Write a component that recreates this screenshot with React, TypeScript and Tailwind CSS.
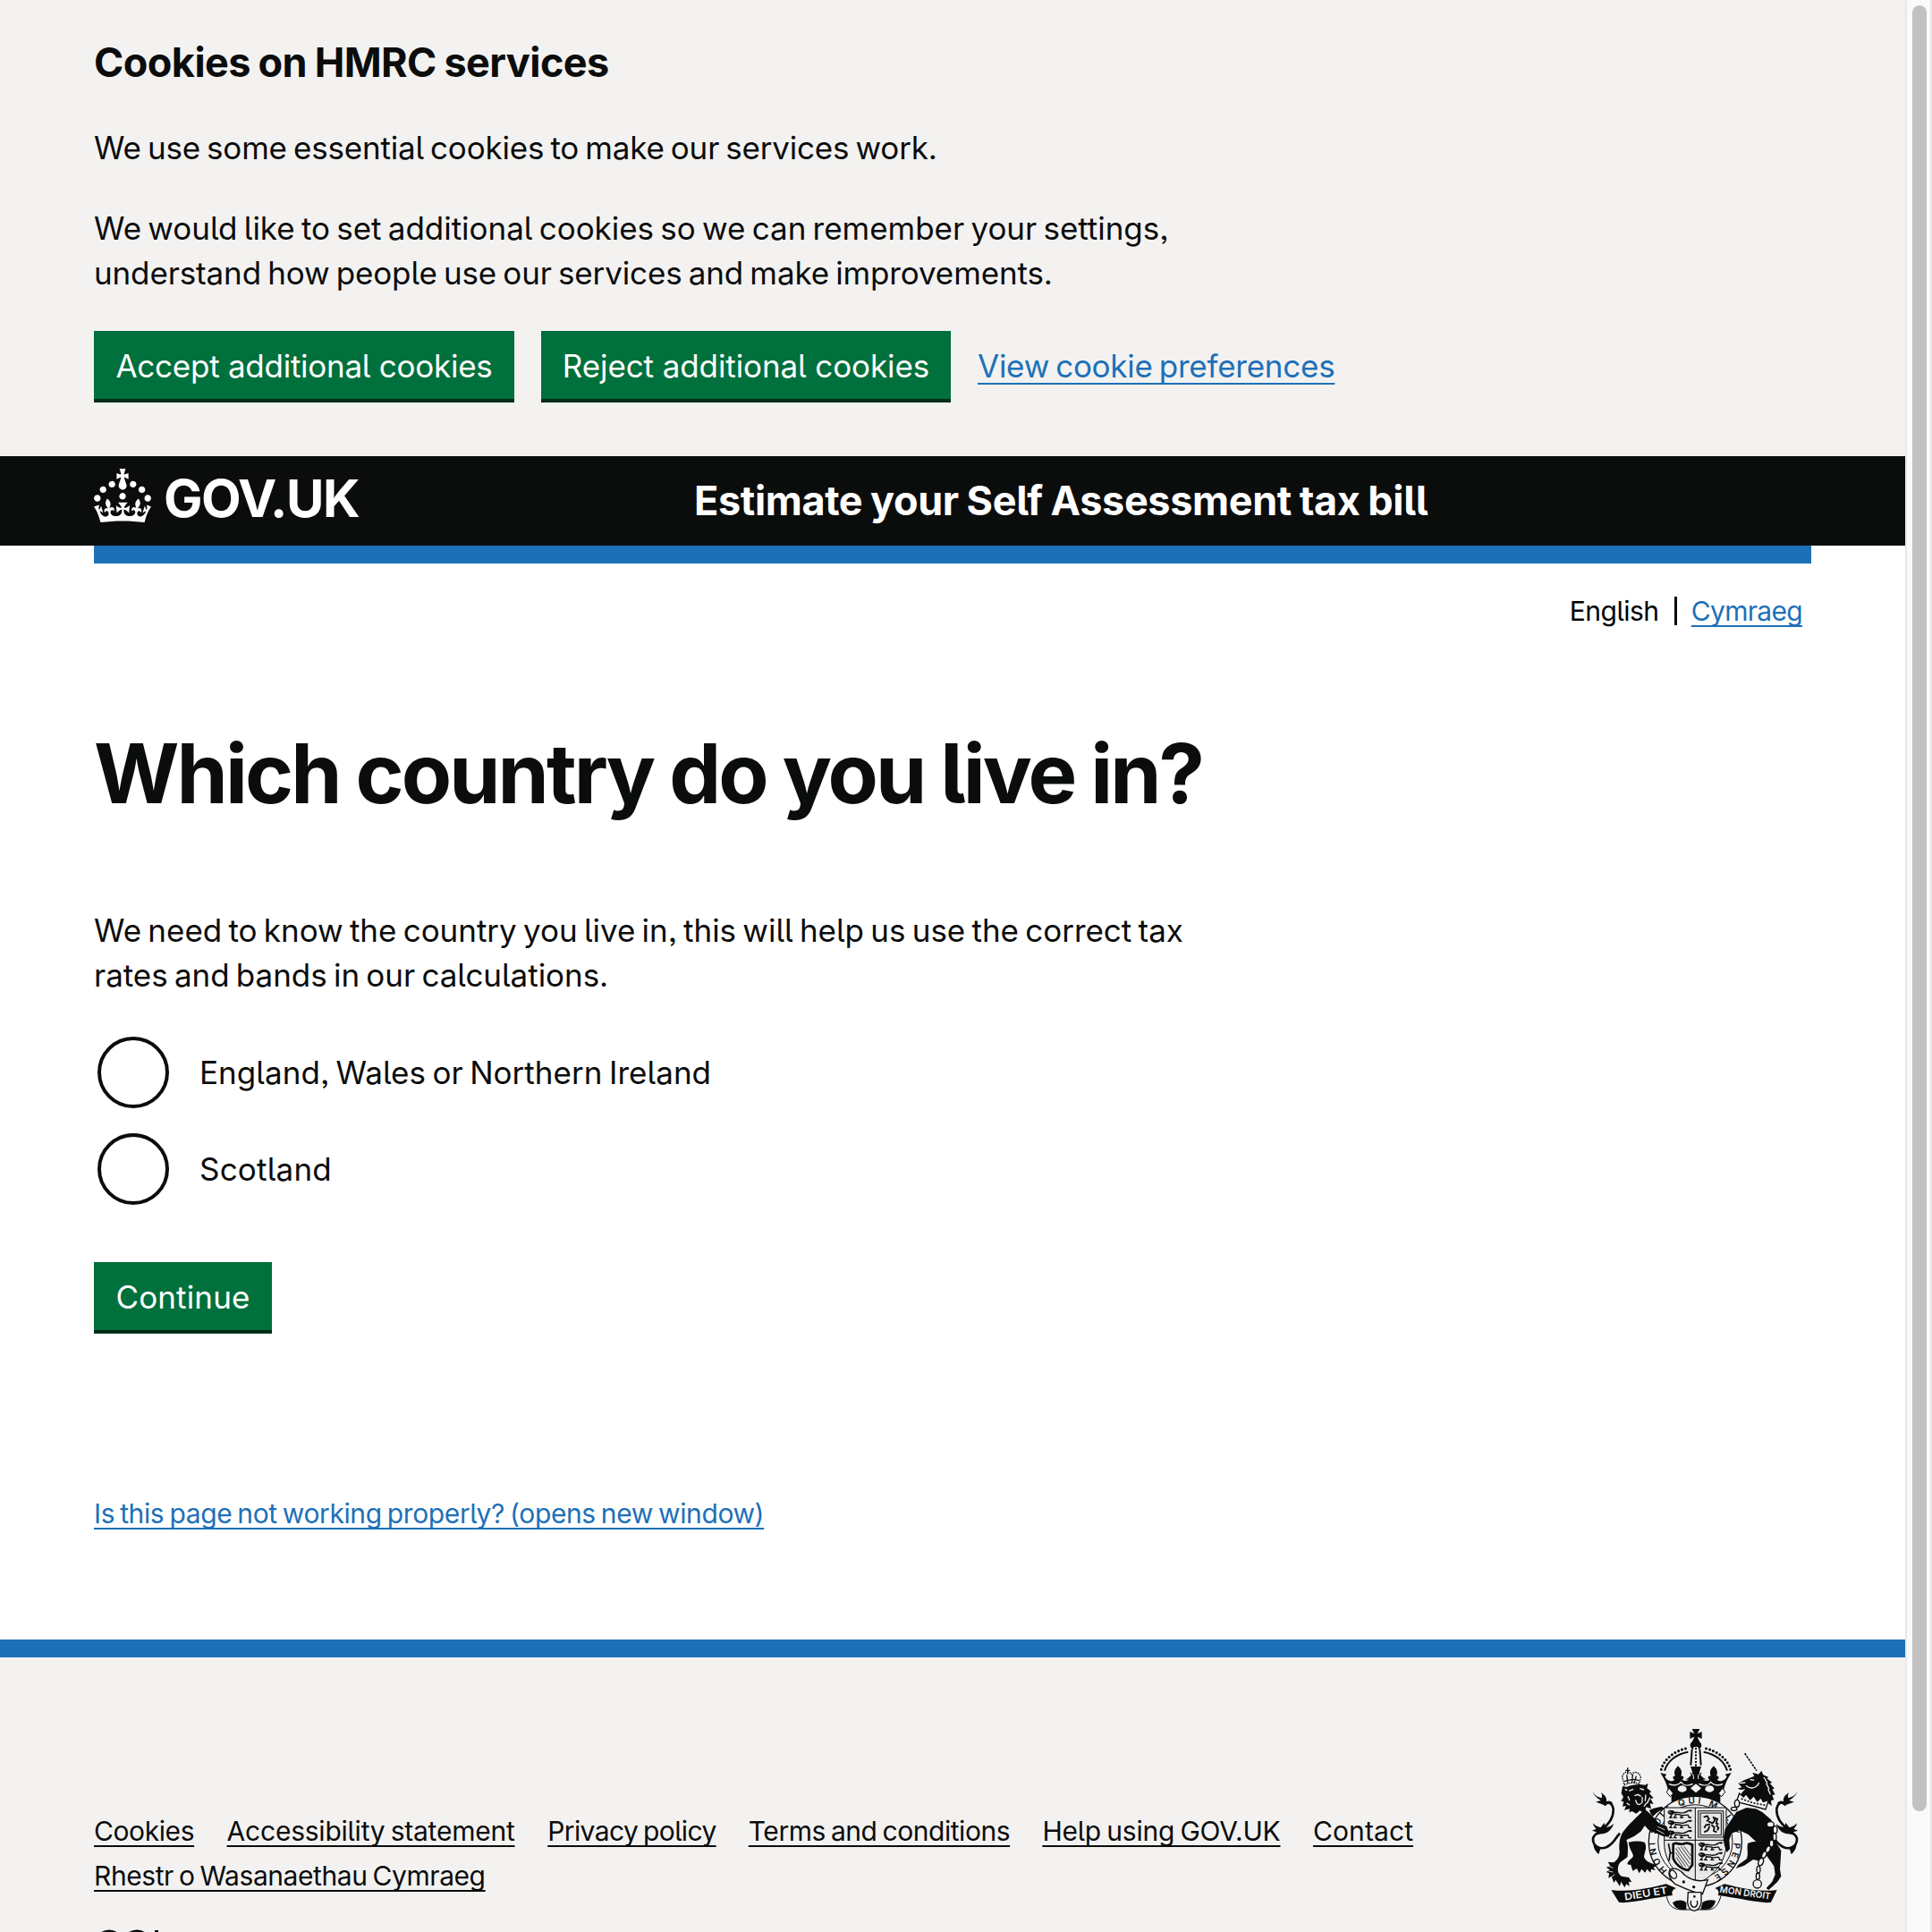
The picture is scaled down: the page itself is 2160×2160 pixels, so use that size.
import type { ReactNode } from "react";

const INK = "#0b0c0c";
const PAPER = "#f3f2f1";

function Button({ children, className }: { children: ReactNode; className: string }) {
  return (
    <button
      type="button"
      className={`flex h-[76px] items-center justify-center whitespace-nowrap bg-[#00703c] pt-[2px] text-[35px] leading-[50px] text-white shadow-[0_4px_0_#002d18] ${className}`}
    >
      {children}
    </button>
  );
}

function Crown() {
  return (
    <svg viewBox="0 0 32 30" className="h-[60px] w-[64px] fill-white" aria-hidden="true">
      <path d="M22.6 10.4c-1 .4-2-.1-2.4-1-.4-.9.1-2 1-2.4.9-.4 2 .1 2.4 1s-.1 2-1 2.4m-5.9 6.7c-.9.4-2-.1-2.4-1-.4-.9.1-2 1-2.4.9-.4 2 .1 2.4 1s-.1 2-1 2.4m10.8-3.7c-1 .4-2-.1-2.4-1-.4-.9.1-2 1-2.4.9-.4 2 .1 2.4 1s0 2-1 2.4m3.3 4.8c-1 .4-2-.1-2.4-1-.4-.9.1-2 1-2.4.9-.4 2 .1 2.4 1s-.1 2-1 2.4M17 4.7l2.3 1.2V2.5l-2.3.7-.2-.2.9-3h-3.4l.9 3-.2.2c-.1.1-2.3-.7-2.3-.7v3.4L15 4.7c.1.1.1.2.2.2l-1.3 4c-.1.2-.1.4-.1.6 0 1.1.8 2 1.9 2.2h.7c1-.2 1.9-1.1 1.9-2.1 0-.2 0-.4-.1-.6l-1.3-4c-.1-.2 0-.2.1-.3m-7.6 5.7c.9.4 2-.1 2.4-1 .4-.9-.1-2-1-2.4-.9-.4-2 .1-2.4 1s0 2 1 2.4m-5 3c.9.4 2-.1 2.4-1 .4-.9-.1-2-1-2.4-.9-.4-2 .1-2.4 1s.1 2 1 2.4m-3.2 4.8c.9.4 2-.1 2.4-1 .4-.9-.1-2-1-2.4-.9-.4-2 .1-2.4 1s0 2 1 2.4m14.8 11c4.4 0 8.6.3 12.3.8 1.1-4.5 2.4-7 3.7-8.8l-2.5-.9c.2 1.3.3 1.9 0 2.7-.4-.4-.8-1.1-1.1-2.3l-1.2 4c.7-.5 1.3-.8 2-.9-1.1 2.5-2.6 3.1-3.5 3-1.1-.2-1.7-1.2-1.5-2.1.3-1.2 1.5-1.5 2.1-.1 1.1-2.3-.8-3-2-2.3 1.9-1.9 2.1-3.5.6-5.6-2.1 1.6-2.1 3.2-1.2 5.5-1.2-1.4-3.2-.6-2.5 1.6.9-1.4 2.1-.5 1.9.8-.2 1.1-1.7 2.1-3.5 1.9-2.7-.2-2.9-2.1-2.9-3.6.7-.1 1.9.5 2.9 1.9l.4-4.3c-1.1 1.1-2.1 1.4-3.2 1.4.4-1.2 2.1-3 2.1-3h-5.4s1.7 1.9 2.1 3c-1.1 0-2.1-.2-3.2-1.4l.4 4.3c1-1.4 2.2-2 2.9-1.9-.1 1.5-.2 3.4-2.9 3.6-1.9.2-3.4-.8-3.5-1.9-.2-1.3 1-2.2 1.9-.8.7-2.3-1.2-3-2.5-1.6.9-2.2.9-3.9-1.2-5.5-1.5 2-1.3 3.7.6 5.6-1.2-.7-3.1 0-2 2.3.6-1.4 1.8-1.1 2.1.1.2.9-.3 1.9-1.5 2.1-.9.2-2.4-.5-3.5-3 .6 0 1.2.3 2 .9l-1.2-4c-.3 1.1-.7 1.9-1.1 2.3-.3-.8-.2-1.4 0-2.7l-2.9.9C1.3 23 2.6 25.5 3.7 30c3.7-.5 7.9-.8 12.3-.8" />
    </svg>
  );
}

/* One walking lion of the English quarters, about 84 x 26 units. */
function PassantLion({ x, y }: { x: number; y: number }) {
  return (
    <g transform={`translate(${x} ${y})`}>
      <path d="M0 5l8-5 12 2 4 6-5 7-9 1-7-4z" fill={INK} />
      <path
        d="M20 9c14-5 26 5 38-1s14-8 20-3M24 13c10 3 14 1 22 4s16-3 24 0M14 16l-6 9h8M28 15l-6 10h9M48 17l-4 8h9M68 15l4 10h8M62 8c5-8 12-8 20-6"
        fill="none"
        stroke={INK}
        strokeWidth="4.2"
      />
      <path d="M4 6l8 2" stroke={PAPER} strokeWidth="2" />
    </g>
  );
}

/* Half of the upper crown, drawn left of its axis at x = 378. */
function CrownHalf() {
  return (
    <g>
      <path d="M262 160C270 128 305 96 352 88" fill="none" stroke={INK} strokeWidth="9" strokeLinecap="round" strokeDasharray="0.1 12.4" />
      <path d="M273 164C283 132 312 108 352 101" fill="none" stroke={INK} strokeWidth="6" />
      <path d="M365 92L361 146" stroke={INK} strokeWidth="6" />
      <path
        d="M258 171l22 5-6 8c6 12 20 20 33 10-8-2-8-14 2-12-6-14-2-22 9-34 12 12 15 20 10 34 10-3 12 8 4 12 12 8 26 2 34-10l-8-14 22 4v88c-34 0-62 1-84 9v-22l-10-12c-4-26-14-48-28-67z"
        fill={INK}
      />
      <path d="M288 208c16 8 32 4 40-6 8 12 24 14 40 6" fill="none" stroke={PAPER} strokeWidth="4" />
      <ellipse cx="332" cy="225" rx="15" ry="11" fill={PAPER} />
      <path d="M288 222l14 18-10 11-12-15z" fill={PAPER} stroke={INK} strokeWidth="3" />
    </g>
  );
}

/* A supporter's tail with its tufts, drawn for the left-hand side. */
function Tail() {
  return (
    <g transform="translate(-5 0)">
      <path d="M128 374C112 392 108 404 96 412C76 430 52 426 42 410C30 386 46 378 66 362C96 340 108 316 106 292C103 274 92 268 78 272" fill="none" stroke={INK} strokeWidth="8" />
      <path d="M37 232c6 18 18 20 30 24 2-6 2-12-2-19 14 10 20 18 18 30 10-4 18 0 22 8-12-3-20 1-26 8-10-10-22-8-32-16 8-1 12-1 17-4-14-7-24-17-27-31z" fill={INK} />
      <path d="M38 340c8 10 16 12 26 14l12-16 2 16c8 0 18-2 30-12-8 22-24 34-42 34l-20 4 9-12c-8 2-14 0-20-4 6 0 10-2 14-6-6-4-10-10-11-18z" fill={INK} />
      <path d="M40 408l24 14-7 22c-10-8-19-22-17-36z" fill={INK} />
    </g>
  );
}

function RoyalArms() {
  return (
    <svg viewBox="0 0 750 660" className="h-[220px] w-[250px]" aria-hidden="true">
      {/* upper crown */}
      <CrownHalf />
      <g transform="matrix(-1 0 0 1 756 0)">
        <CrownHalf />
      </g>
      <path d="M365 24h26l-8 16 15-7v24l-15-7 8 18h-26l8-18-15 7V33l15 7z" fill={INK} />
      <path d="M360 84c-4-12 6-20 18-20s22 8 18 20l-7 10-5-10h-12l-5 10z" fill={INK} />
      <path d="M378 90v58" stroke={INK} strokeWidth="7" strokeLinecap="round" strokeDasharray="0.1 11" />
      <path d="M378 206c-12-8-24-14-36-12 14-6 22-14 24-26l-6-18h36l-6 18c2 12 10 20 24 26-12-2-24 4-36 12z" fill={INK} />
      <path d="M356 162l14 18v12M400 162l-14 18v12" fill="none" stroke={PAPER} strokeWidth="3" />
      <path d="M378 208l18 15-18 15-18-15z" fill={PAPER} />

      {/* garter */}
      <ellipse cx="376" cy="402" rx="156" ry="152" fill={PAPER} stroke={INK} strokeWidth="4" />
      <ellipse cx="376" cy="402" rx="125" ry="124" fill="none" stroke={INK} strokeWidth="3" />
      <defs>
        <path id="garter-text" d="M284 500A132 130 0 1 1 420 526" />
      </defs>
      <text fill={INK} fontSize="30" className="font-semibold">
        <textPath href="#garter-text" startOffset="2" textLength="655" lengthAdjust="spacing">
          HONI SOIT QUI MAL Y PENSE
        </textPath>
      </text>

      {/* shield */}
      <path d="M272 288H480V410C478 470 440 520 376 545C312 520 274 470 272 410Z" fill="#e8e8e7" stroke={INK} strokeWidth="3" />
      <path d="M376 288V545M272 397H480" stroke={INK} strokeWidth="3" />
      <PassantLion x={283} y={296} />
      <PassantLion x={283} y={330} />
      <PassantLion x={283} y={364} />
      <PassantLion x={386} y={404} />
      <PassantLion x={386} y={438} />
      <PassantLion x={386} y={472} />
      <rect x="386" y="299" width="84" height="88" fill="none" stroke={INK} strokeWidth="3" />
      <rect x="393" y="306" width="70" height="74" fill="none" stroke={INK} strokeWidth="3" />
      <path
        d="M404 320l12-4 6 10-8 8M420 334l14 6 8-10-6-12M440 322l10 4-4 14 8 4M426 344l-14 2-6 10M430 346l10 8-2 12 10 4M424 350l-6 14-12 6M446 346l8 10-4 8"
        fill="none"
        stroke={INK}
        strokeWidth="5.500"
      />
      <path d="M302 410c14-8 24 6 38-2 10-4 18 0 26 4v68l-14 18c-22-2-42-20-50-40z" fill="none" stroke={INK} strokeWidth="8" />
      <path d="M310 424l44 62M318 420l40 56M328 418l32 44M338 418l24 32M310 438l34 48M312 454l22 32" stroke={INK} strokeWidth="2.4" />
      <path d="M286 408l6 30-4 28M290 440h16" fill="none" stroke={INK} strokeWidth="5" />

      {/* lion */}
      <Tail />
      <path d="M131 184c8-22 24-18 31-8 8-10 26-10 31 10l-5 22c-18-5-34-5-50 4z" fill="none" stroke={INK} strokeWidth="4" strokeDasharray="5 3" />
      <path d="M149 154v22M142 163h15M146 178l4 28M166 176l-2 28M178 182l-6 22M138 200c16-6 36-8 50-3" fill="none" stroke={INK} strokeWidth="4" />
      <path
        d="M132 216l14 2c20-8 42-10 62-6l10-6-4 16 14 12-6 6 14 16-10 2 10 18-12-2 4 18-16-6-8 20-14-8-12 10-14-8-10 4 2-12-18 4 6-14-12 2 4-16-9-2 8-14-7-12z"
        fill={INK}
      />
      <path
        d="M140 226l8 4M154 232l14-6M190 224l14 4M172 248l12-4 10 6M176 262c4 18 14 20 22 8v-18M150 250l6 14M210 244l-2 22M224 254l-10 20M146 272l10 8M204 284l8-12"
        fill="none"
        stroke={PAPER}
        strokeWidth="4"
      />
      <path
        d="M190 294l16-2 20 18 30 32 24 8 4 12 8 10-5 14-18-2-28-12-22-10-12-14-14 20-22 16-26 12c8 20 4 40 4 56-12 12-26 16-30 28-6 18-2 30 10 38l24 4 10 16-10-2 2 16-10-8-6 12-12-20-4 16-14-22-6 10-8-22-10 6 2-16-10-4 12-8-12-8 14-4-8-14 18 2c14-8 24-22 20-46 0-24 2-46 20-66 12-16 38-40 62-64z"
        fill={INK}
      />
      <path d="M250 352l24 10M246 362l26 14M82 500l18 4M84 484l16 6M94 520l12-8" stroke={PAPER} strokeWidth="2.500" />
      <path d="M222 296c14-8 26-8 42-12l8 8-14 6c-10 6-16 12-24 20-6-8-10-14-12-22z" fill={INK} />
      <path d="M152 404c18-4 36-6 54 0 10 16 0 32-2 48 4 16 20 20 44 30l-12 6 6 10-14-4-2 12-12-12-6 12-12-12-8 14-8-16-14 8-6-20-12-2c2-14 16-18 20-28-2-14-12-20-16-46z" fill={INK} />

      {/* unicorn */}
      <g transform="matrix(-1 0 0 1 750 0)">
        <Tail />
      </g>
      <path d="M542 106l40 58" stroke={INK} strokeWidth="5" strokeDasharray="8 3" />
      <path
        d="M520 206l20-10 34-14-6-12 20 6 10-12 6 14 18 8-6 4 18 14-8 2 16 18-8 2 10 18-10 2 6 16-10 2 2 18-18-14-10 8-20-2-30-12-28-8 6-16 12-12-16 2-10-4 14-4z"
        fill={INK}
      />
      <path d="M560 194l14 2M524 206l20-2M546 214c14 12 34 12 44-10M606 186l12 20M614 206l10 20M620 226l8 18" fill="none" stroke={PAPER} strokeWidth="4" />
      <path d="M524 240l14 12 8-10 14 18 12-12 12 18 12-12 8 14 18-6-10 32-44-12-54-14z" fill={PAPER} stroke={INK} strokeWidth="4" />
      <path d="M530 258l40 14 42 8" fill="none" stroke={INK} strokeWidth="5" strokeDasharray="6 5" />
      <path
        d="M514 302l34-14 32 4 22 12 28 24 12 24 2 28 4 26 16 26-2 32-2 30 4 24-12 18-14 14-16 14-8-6 20-22 10-24-4-28-24-34-26-38-36-34-30-14-26 10-8 22 2 30-10 12-8-22-4-22 6-34z"
        fill={INK}
      />
      <path d="M552 408c16-8 34-6 50-4l18 18-6 26-18 20-26-6-30 20-28 10 8-12 28-20c8-16 0-32 4-52z" fill={INK} />
      <g fill={PAPER} stroke={INK} strokeWidth="4">
        <ellipse cx="516" cy="274" rx="8" ry="12" />
        <ellipse cx="506" cy="292" rx="10" ry="6" />
        <ellipse cx="628" cy="344" rx="12" ry="9" />
        <ellipse cx="644" cy="362" rx="7" ry="12" />
        <ellipse cx="642" cy="386" rx="6" ry="12" />
        <ellipse cx="632" cy="408" rx="7" ry="12" />
        <ellipse cx="620" cy="428" rx="7" ry="12" transform="rotate(24 620 428)" />
        <ellipse cx="607" cy="446" rx="7" ry="12" transform="rotate(24 607 446)" />
        <ellipse cx="596" cy="470" rx="8" ry="13" transform="rotate(20 596 470)" />
        <ellipse cx="588" cy="496" rx="6" ry="12" />
        <ellipse cx="586" cy="518" rx="6" ry="11" />
        <circle cx="584" cy="544" r="14" />
      </g>

      {/* garter strap */}
      <path d="M292 494c20-6 38 6 48 20 20 16 46 24 78 16l-18 48c-34-6-62-20-92-34-16-12-26-34-16-50z" fill={PAPER} stroke={INK} strokeWidth="4" />
      <ellipse cx="302" cy="512" rx="10" ry="15" fill="none" stroke={INK} strokeWidth="4" transform="rotate(-30 302 512)" />
      <circle cx="337" cy="537" r="5" fill={INK} />
      <circle cx="371" cy="554" r="5" fill={INK} />

      {/* ribbon */}
      <path d="M94 564c60 8 120-4 184-20l34 14c-14 6-16 14-12 24-60 8-110 20-166 25l-14-2z" fill={INK} />
      <path d="M650 564c-60 8-112-4-176-20l-32 14c14 6 14 14 10 24 60 8 110 20 164 25l14-2z" fill={INK} />
      <text x="140" y="599" fill={PAPER} fontSize="34" className="font-semibold" textLength="146" lengthAdjust="spacingAndGlyphs" transform="rotate(-9 140 599)">
        DIEU ET
      </text>
      <text x="457" y="572" fill={PAPER} fontSize="31" className="font-semibold" textLength="172" lengthAdjust="spacingAndGlyphs" transform="rotate(8 457 572)">
        MON DROIT
      </text>
      <path d="M280 586c6 26 16 42 48 44h92c24-2 34-18 42-46" fill="none" stroke={INK} strokeWidth="3" />
      <path d="M300 606c16-10 34-10 46 0v24c-20 2-40-4-46-24zM444 600c-12-4-32-4-44 6l-6 24c26 2 46-4 50-30z" fill={INK} />
      <path d="M352 572h44v34c-2 16-10 26-24 28-14-2-20-12-22-28z" fill={PAPER} stroke={INK} strokeWidth="4" />
      <path d="M362 600c-4 12 2 22 10 22s14-10 10-22" fill="none" stroke={INK} strokeWidth="4" />
      <circle cx="373" cy="586" r="4" fill={INK} />
    </svg>
  );
}

function OglMark() {
  return (
    <svg viewBox="0 0 82 34" className="h-[34px] w-[82px]" aria-hidden="true">
      <circle cx="17" cy="17" r="13.5" fill="none" stroke={INK} strokeWidth="6" />
      <path d="M58 8a13.500 13.500 0 1 0 0 18v-8h-8" fill="none" stroke={INK} strokeWidth="6" />
      <path d="M70 1v30h12" fill="none" stroke={INK} strokeWidth="4" />
    </svg>
  );
}

const link = "underline decoration-2 [text-decoration-skip-ink:none]";

const footerLinks = [
  { label: "Cookies", className: "w-[112px] tracking-[-0.4px]" },
  { label: "Accessibility statement", className: "w-[322px] tracking-[-0.23px]" },
  { label: "Privacy policy", className: "w-[188px] tracking-[-0.6px]" },
  { label: "Terms and conditions", className: "w-[292px] tracking-[-0.45px]" },
  { label: "Help using GOV.UK", className: "w-[266px] tracking-[-0.2px]" },
  { label: "Contact", className: "w-[112px] tracking-[0.1px]" },
];

export default function App() {
  return (
    <div className="flex h-[2160px] w-[2160px] overflow-hidden bg-white font-['Inter',sans-serif] text-[#0b0c0c] [font-feature-settings:'cv05','ss03']">
      <div className="flex w-[2130px] shrink-0 flex-col">
        <section className="h-[510px] shrink-0 bg-[#f3f2f1] px-[105px] pt-10 text-[35px] leading-[50px] [word-spacing:-2.5px]">
          <h2 className="mb-10 text-[45px] leading-[60px] font-bold tracking-[-0.55px] [word-spacing:-1.5px]">Cookies on HMRC services</h2>
          <p className="mb-10 tracking-[-0.19px]">We use some essential cookies to make our services work.</p>
          <p className="mb-10">
            <span className="block tracking-[-0.03px]">We would like to set additional cookies so we can remember your settings,</span>
            <span className="block tracking-[-0.13px]">understand how people use our services and make improvements.</span>
          </p>
          <div className="flex items-center">
            <Button className="w-[470px] tracking-[-0.26px]">Accept additional cookies</Button>
            <Button className="ml-[30px] w-[458px] tracking-[-0.1px]">Reject additional cookies</Button>
            <a href="#" className={`ml-[30px] pt-[2px] tracking-[-0.25px] text-[#1d70b8] underline-offset-[6px] ${link}`}>
              View cookie preferences
            </a>
          </div>
        </section>

        <header className="flex h-[100px] shrink-0 items-start bg-[#0b0c0c] px-[105px] text-white">
          <a href="#" className="flex w-[671px] pt-[14px]">
            <Crown />
            <span className="ml-[14px] text-[58px] leading-[66px] font-bold tracking-[-1.5px]">GOV.UK</span>
          </a>
          <span className="text-[45px] leading-[100px] font-bold tracking-[-0.37px] [word-spacing:-1.5px]">Estimate your Self Assessment tax bill</span>
        </header>

        <main className="flex shrink-0 flex-col items-start px-[105px] text-[35px] leading-[50px] [word-spacing:-2.5px]">
          <div className="h-5 w-[1920px] bg-[#1d70b8]" />
          <nav className="mt-[28px] mr-[10px] flex items-center self-end text-[30px] leading-[50px]">
            <span className="w-[101px] tracking-[-0.5px] text-black">English</span>
            <span className="ml-[16px] h-[32px] w-[3px] bg-[#0b0c0c]" />
            <a href="#" className={`ml-[16px] tracking-[-0.7px] text-[#1d70b8] underline-offset-[5px] ${link}`}>
              Cymraeg
            </a>
          </nav>
          <h1 className="mt-[107px] text-[92px] leading-[100px] font-bold tracking-[-2.9px] [word-spacing:-1px]">Which country do you live in?</h1>
          <p className="mt-[100px]">
            <span className="block tracking-[-0.03px]">We need to know the country you live in, this will help us use the correct tax</span>
            <span className="block tracking-[-0.04px]">rates and bands in our calculations.</span>
          </p>
          <div className="mt-[44px] ml-1 flex flex-col gap-7">
            <label className="flex items-center gap-[34px] tracking-[0.05px]">
              <span className="size-20 rounded-full border-4 border-[#0b0c0c]" />
              England, Wales or Northern Ireland
            </label>
            <label className="flex items-center gap-[34px] tracking-[0.2px]">
              <span className="size-20 rounded-full border-4 border-[#0b0c0c]" />
              Scotland
            </label>
          </div>
          <Button className="mt-16 w-[199px] tracking-[0.14px]">Continue</Button>
          <a href="#" className={`mt-[180px] text-[30px] leading-[50px] tracking-[-0.38px] text-[#1d70b8] underline-offset-[5px] [word-spacing:-2px] ${link}`}>
            Is this page not working properly? (opens new window)
          </a>
        </main>

        <footer className="mt-[116px] flex grow items-start justify-between border-t-20 border-[#1d70b8] bg-[#f3f2f1] pr-[110px] pl-[105px]">
          <div className="pt-[169px]">
            <ul className="flex w-[1560px] flex-wrap gap-x-[36.6px] text-[30px] leading-[50px] whitespace-nowrap [word-spacing:-2px]">
              {footerLinks.map((item) => (
                <li key={item.label} className={item.className}>
                  <a href="#" className={`underline-offset-[5px] ${link}`}>
                    {item.label}
                  </a>
                </li>
              ))}
              <li className="tracking-[-0.43px]">
                <a href="#" className={`underline-offset-[5px] ${link}`}>
                  Rhestr o Wasanaethau Cymraeg
                </a>
              </li>
            </ul>
            <div className="mt-[35px]">
              <OglMark />
            </div>
          </div>
          <div className="mt-[72px]">
            <RoyalArms />
          </div>
        </footer>
      </div>
      <div className="w-[30px] border-x-2 border-[#e8e8e8] bg-[#fafafa] pt-[6px] pl-[6px]">
        <div className="h-[2019px] w-4 rounded-full bg-[#c1c1c1]" />
      </div>
    </div>
  );
}
